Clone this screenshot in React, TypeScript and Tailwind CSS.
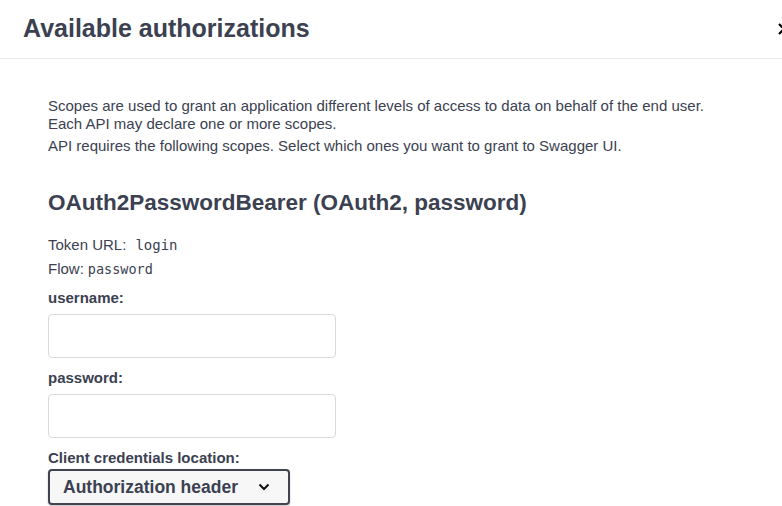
import React from "react";

export default function App() {
  return (
    <div className="w-[782px] h-[506px] overflow-hidden bg-white text-[#3b4151]" style={{ fontFamily: '"Liberation Sans", Arial, sans-serif' }}>
      <div className="flex h-[59px] items-center justify-between border-b border-[#ebebeb] pl-[23px]">
        <h3 className="text-[25px] font-bold leading-[29px] -mt-[2px]">Available authorizations</h3>
        <div className="translate-x-[8px] shrink-0 w-[12px]">
          <svg width="12" height="12" viewBox="0 0 12 12">
            <path d="M1 1 L11 11 M11 1 L1 11" stroke="#000" strokeWidth="2.2" fill="none" />
          </svg>
        </div>
      </div>
      <div className="px-[48px] pt-[38px]">
        <p className="text-[15px] leading-[18px]">
          Scopes are used to grant an application different levels of access to data on behalf of the end user.
          <br />
          Each API may declare one or more scopes.
        </p>
        <p className="mt-[4px] text-[15px] leading-[18px]">API requires the following scopes. Select which ones you want to grant to Swagger UI.</p>
        <h4 className="mt-[36px] text-[22.5px] font-bold leading-[24px]">OAuth2PasswordBearer (OAuth2, password)</h4>
        <p className="mt-[21px] text-[15px] leading-[18px]">
          Token URL:
          <code className="ml-[9px] text-[14px]" style={{ fontFamily: '"DejaVu Sans Mono", monospace' }}>login</code>
        </p>
        <p className="mt-[6px] text-[15px] leading-[18px]">
          Flow:
          <code className="ml-[4px] text-[13.5px]" style={{ fontFamily: '"DejaVu Sans Mono", monospace' }}>password</code>
        </p>
        <label className="mt-[12px] block text-[15px] font-bold leading-[16px]">username:</label>
        <input className="mt-[8px] block h-[44px] w-[288px] rounded-[4px] border border-[#d9d9d9] bg-white px-[10px] outline-none" />
        <label className="mt-[12px] block text-[15px] font-bold leading-[16px]">password:</label>
        <input type="password" className="mt-[8px] block h-[44px] w-[288px] rounded-[4px] border border-[#d9d9d9] bg-white px-[10px] outline-none" />
        <label className="mt-[12px] block text-[15px] font-bold leading-[16px]">Client credentials location:</label>
        <div className="mt-[3px] flex h-[36px] w-[242px] items-center rounded-[4px] border-2 border-[#41444e] bg-[#f7f7f7] pl-[13px] pr-[18px] shadow-[0_1px_2px_rgba(0,0,0,0.25)]">
          <span className="text-[17.5px] font-bold leading-[20px]">Authorization header</span>
          <svg className="ml-auto" width="12" height="8" viewBox="0 0 12 8">
            <path d="M1.5 1.5 L6 6 L10.5 1.5" stroke="#111" strokeWidth="2" fill="none" />
          </svg>
        </div>
      </div>
    </div>
  );
}
